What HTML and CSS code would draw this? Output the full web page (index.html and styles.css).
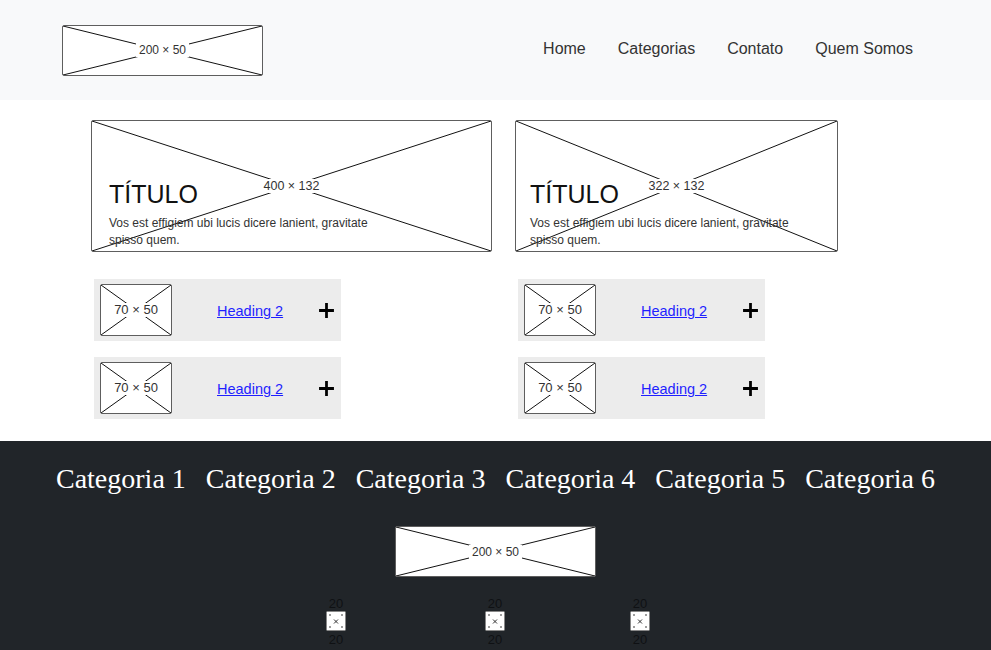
FILE: index.html
```html
<!DOCTYPE html>
<html lang="pt">
<head>
<meta charset="utf-8">
<title>Wireframe</title>
<link rel="stylesheet" href="styles.css">
</head>
<body>
<header class="topbar">
  <div class="ph ph-logo">
    <svg class="ph-x" viewBox="0 0 100 100" preserveAspectRatio="none"><line x1="0" y1="0" x2="100" y2="100"/><line x1="100" y1="0" x2="0" y2="100"/></svg>
    <span class="ph-label">200 × 50</span>
  </div>
  <nav class="nav">
    <a href="#">Home</a>
    <a href="#">Categorias</a>
    <a href="#">Contato</a>
    <a href="#">Quem Somos</a>
  </nav>
</header>

<main class="content">
  <section class="col">
    <div class="ph card card-wide">
      <svg class="ph-x" viewBox="0 0 100 100" preserveAspectRatio="none"><line x1="0" y1="0" x2="100" y2="100"/><line x1="100" y1="0" x2="0" y2="100"/></svg>
      <span class="ph-label">400 × 132</span>
      <div class="card-text">
        <h1 class="card-title">TÍTULO</h1>
        <p class="card-desc">Vos est effigiem ubi lucis dicere lanient, gravitate spisso quem.</p>
      </div>
    </div>
    <div class="item">
      <div class="ph thumb">
        <svg class="ph-x" viewBox="0 0 100 100" preserveAspectRatio="none"><line x1="0" y1="0" x2="100" y2="100"/><line x1="100" y1="0" x2="0" y2="100"/></svg>
        <span class="ph-label">70 × 50</span>
      </div>
      <a class="item-link" href="#">Heading 2</a>
      <svg class="plus" viewBox="0 0 16 16"><path d="M8 1v14M1 8h14"/></svg>
    </div>
    <div class="item">
      <div class="ph thumb">
        <svg class="ph-x" viewBox="0 0 100 100" preserveAspectRatio="none"><line x1="0" y1="0" x2="100" y2="100"/><line x1="100" y1="0" x2="0" y2="100"/></svg>
        <span class="ph-label">70 × 50</span>
      </div>
      <a class="item-link" href="#">Heading 2</a>
      <svg class="plus" viewBox="0 0 16 16"><path d="M8 1v14M1 8h14"/></svg>
    </div>
  </section>

  <section class="col">
    <div class="ph card card-narrow">
      <svg class="ph-x" viewBox="0 0 100 100" preserveAspectRatio="none"><line x1="0" y1="0" x2="100" y2="100"/><line x1="100" y1="0" x2="0" y2="100"/></svg>
      <span class="ph-label">322 × 132</span>
      <div class="card-text">
        <h1 class="card-title">TÍTULO</h1>
        <p class="card-desc">Vos est effigiem ubi lucis dicere lanient, gravitate spisso quem.</p>
      </div>
    </div>
    <div class="item">
      <div class="ph thumb">
        <svg class="ph-x" viewBox="0 0 100 100" preserveAspectRatio="none"><line x1="0" y1="0" x2="100" y2="100"/><line x1="100" y1="0" x2="0" y2="100"/></svg>
        <span class="ph-label">70 × 50</span>
      </div>
      <a class="item-link" href="#">Heading 2</a>
      <svg class="plus" viewBox="0 0 16 16"><path d="M8 1v14M1 8h14"/></svg>
    </div>
    <div class="item">
      <div class="ph thumb">
        <svg class="ph-x" viewBox="0 0 100 100" preserveAspectRatio="none"><line x1="0" y1="0" x2="100" y2="100"/><line x1="100" y1="0" x2="0" y2="100"/></svg>
        <span class="ph-label">70 × 50</span>
      </div>
      <a class="item-link" href="#">Heading 2</a>
      <svg class="plus" viewBox="0 0 16 16"><path d="M8 1v14M1 8h14"/></svg>
    </div>
  </section>
</main>

<footer class="footer">
  <div class="cats">
    <span>Categoria 1</span>
    <span>Categoria 2</span>
    <span>Categoria 3</span>
    <span>Categoria 4</span>
    <span>Categoria 5</span>
    <span>Categoria 6</span>
  </div>
  <div class="footer-logo-row">
    <div class="ph ph-logo">
      <svg class="ph-x" viewBox="0 0 100 100" preserveAspectRatio="none"><line x1="0" y1="0" x2="100" y2="100"/><line x1="100" y1="0" x2="0" y2="100"/></svg>
      <span class="ph-label">200 × 50</span>
    </div>
  </div>
  <div class="socials">
    <div class="mini">
      <span class="mini-num">20</span>
      <svg class="mini-box" viewBox="0 0 20 20"><rect x="0.5" y="0.5" width="19" height="19" rx="1"/><circle cx="4" cy="4" r="0.8"/><circle cx="16" cy="4" r="0.8"/><circle cx="4" cy="16" r="0.8"/><circle cx="16" cy="16" r="0.8"/><path d="M8 8.5l4 4M12 8.5l-4 4"/></svg>
      <span class="mini-num">20</span>
    </div>
    <div class="mini">
      <span class="mini-num">20</span>
      <svg class="mini-box" viewBox="0 0 20 20"><rect x="0.5" y="0.5" width="19" height="19" rx="1"/><circle cx="4" cy="4" r="0.8"/><circle cx="16" cy="4" r="0.8"/><circle cx="4" cy="16" r="0.8"/><circle cx="16" cy="16" r="0.8"/><path d="M8 8.5l4 4M12 8.5l-4 4"/></svg>
      <span class="mini-num">20</span>
    </div>
    <div class="mini">
      <span class="mini-num">20</span>
      <svg class="mini-box" viewBox="0 0 20 20"><rect x="0.5" y="0.5" width="19" height="19" rx="1"/><circle cx="4" cy="4" r="0.8"/><circle cx="16" cy="4" r="0.8"/><circle cx="4" cy="16" r="0.8"/><circle cx="16" cy="16" r="0.8"/><path d="M8 8.5l4 4M12 8.5l-4 4"/></svg>
      <span class="mini-num">20</span>
    </div>
  </div>
</footer>
</body>
</html>
```

FILE: styles.css
```css
* { box-sizing: border-box; }

body {
  margin: 0;
  font-family: "Liberation Sans", Arial, sans-serif;
  color: #333;
  background: #fff;
}

/* placeholder image */
.ph {
  display: grid;
  background: #fff;
  border: 1.5px solid #5e5e5e;
  border-radius: 2px;
}
.ph > * { grid-area: 1 / 1; }
.ph-x {
  width: 100%;
  height: 100%;
  stroke: #111;
  stroke-width: 1;
}
.ph-x line { vector-effect: non-scaling-stroke; }
.ph-label {
  place-self: center;
  background: #fff;
  padding: 0 3px;
  font-size: 12px;
  line-height: 14px;
  color: #333;
}

/* header */
.topbar {
  height: 100px;
  background: #f8f9fa;
  display: flex;
  align-items: center;
  justify-content: space-between;
  padding: 0 63px 0 62px;
}
.ph-logo {
  width: 201px;
  height: 51px;
}
.nav {
  display: flex;
  margin-top: -3px;
  margin-right: -1px;
}
.nav a {
  padding: 0 16px;
  font-size: 16px;
  color: #333;
  text-decoration: none;
}

/* main */
.content {
  display: grid;
  grid-template-columns: 424px 424px;
  padding: 20px 0 22px 91px;
}
.col {
  display: flex;
  flex-direction: column;
  align-items: flex-start;
}
.card {
  height: 132px;
  margin-bottom: 27px;
}
.card-wide { width: 401px; }
.card-narrow { width: 323px; }
.card .ph-label { font-size: 12.5px; }
.card-text {
  align-self: end;
  justify-self: start;
  padding: 0 17px 2px;
  width: 300px;
  position: relative;
}
.card-narrow .card-text { padding-left: 14px; }
.card-title {
  margin: 0 0 6px;
  font-size: 25px;
  line-height: 30px;
  font-weight: 400;
  color: #111;
}
.card-desc {
  margin: 0;
  font-size: 12px;
  line-height: 17px;
  color: #333;
  width: 280px;
}

.item {
  width: 247px;
  height: 62px;
  margin-left: 3px;
  margin-bottom: 16px;
  background: #ececec;
  display: flex;
  align-items: center;
  padding: 0 6px;
}
.item:last-child { margin-bottom: 0; }
.thumb {
  width: 72px;
  height: 52px;
  flex: none;
}
.thumb .ph-label { font-size: 13px; padding: 0 1px; }
.item-link {
  margin-left: 45px;
  margin-top: 2px;
  font-size: 14.5px;
  color: #1f1fff;
  white-space: nowrap;
}
.plus {
  margin-left: 35px;
  width: 17px;
  height: 17px;
  flex: none;
  stroke: #000;
  stroke-width: 2.6;
  fill: none;
}

/* footer */
.footer {
  background: #212529;
  padding-top: 21px;
  height: 220px;
}
.cats {
  display: flex;
  justify-content: center;
  gap: 20px;
  font-family: "Liberation Serif", Georgia, serif;
  font-size: 28px;
  line-height: 34px;
  color: #fff;
}
.footer-logo-row {
  display: flex;
  justify-content: center;
  margin-top: 30px;
}
.socials {
  display: grid;
  grid-template-columns: 159px 145px 20px;
  padding-left: 326px;
  margin-top: 20px;
}
.mini {
  width: 20px;
  display: flex;
  flex-direction: column;
  align-items: center;
}
.mini-num {
  font-size: 13px;
  line-height: 13px;
  color: #0f1114;
}
.mini-box {
  width: 20px;
  height: 20px;
  fill: #fff;
  stroke: #888;
  stroke-width: 1;
  margin: 1px 0 2px;
}
.mini-box circle { fill: #222; stroke: none; }
.mini-box path { stroke: #333; fill: none; }
```
